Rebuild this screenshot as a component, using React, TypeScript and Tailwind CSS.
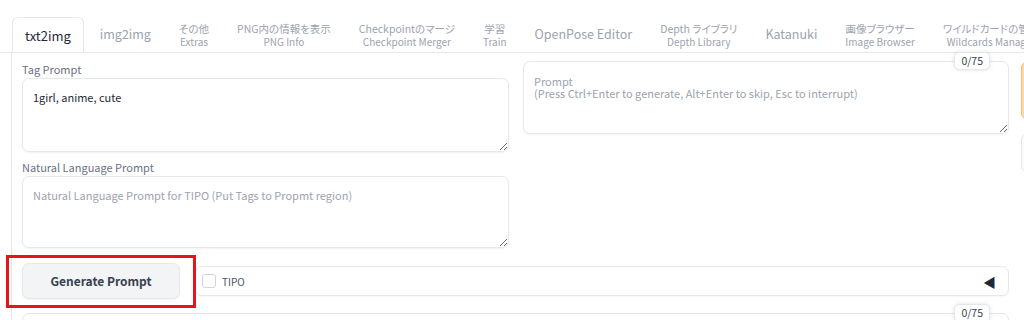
import React from "react";

const tabs: { top?: string; bottom: string }[] = [
  { bottom: "img2img" },
  { top: "その他", bottom: "Extras" },
  { top: "PNG内の情報を表示", bottom: "PNG Info" },
  { top: "Checkpointのマージ", bottom: "Checkpoint Merger" },
  { top: "学習", bottom: "Train" },
  { bottom: "OpenPose Editor" },
  { top: "Depth ライブラリ", bottom: "Depth Library" },
  { bottom: "Katanuki" },
  { top: "画像ブラウザー", bottom: "Image Browser" },
  { top: "ワイルドカードの管理", bottom: "Wildcards Manager" },
];

const Counter = () => (
  <div className="absolute right-[19px] -top-[9px] z-10 rounded-[5px] border border-[#e5e7eb] bg-white px-[6px] text-[10.5px] leading-[16px] text-[#374151] shadow-[0_0_4px_rgba(0,0,0,0.12)]">
    0/75
  </div>
);

const App = () => {
  return (
    <div className="relative w-[1024px] h-[320px] overflow-hidden bg-white font-['Noto_Sans_CJK_JP','Noto_Sans',sans-serif] [font-feature-settings:'palt']">
      {/* Tab bar */}
      <div className="flex items-end pt-[17px] pl-[12px] h-[53px] border-b border-[#e5e7eb] whitespace-nowrap overflow-hidden">
        <div className="shrink-0 h-[36px] -mb-px flex items-center px-[12px] border border-b-0 border-[#e5e7eb] rounded-t-[6px] bg-white text-[13px] text-[#1f2937]">
          txt2img
        </div>
        {tabs.map((t, i) => (
          <div
            key={i}
            className={
              "shrink-0 h-[35px] flex flex-col items-center justify-center px-[14px] text-[#9ca3af] " +
              (i === 0 ? "ml-[2px]" : "")
            }
          >
            {t.top ? (
              <>
                <span className="text-[10.5px] leading-[13px]">{t.top}</span>
                <span className="text-[10px] leading-[13px]">{t.bottom}</span>
              </>
            ) : (
              <span className="text-[12.5px]">{t.bottom}</span>
            )}
          </div>
        ))}
      </div>

      {/* Panel */}
      <div className="ml-[11px] border-l border-[#e5e7eb] pl-[10px] pt-[6px]">
        <div className="flex">
          {/* left column */}
          <div className="shrink-0 w-[487px] flex flex-col">
            <label className="text-[11px] leading-[18px] text-[#6b7280] mt-[1px]">Tag Prompt</label>
            <textarea
              defaultValue="1girl, anime, cute"
              className="h-[74px] w-full rounded-[7px] border border-[#e5e7eb] px-[10px] pt-[9px] text-[11px] leading-[18px] text-[#1f2937] shadow-[0_1px_2px_rgba(0,0,0,0.05)] outline-none"
            />
            <label className="mt-[6px] text-[11px] leading-[18px] text-[#6b7280]">Natural Language Prompt</label>
            <textarea
              placeholder="Natural Language Prompt for TIPO (Put Tags to Propmt region)"
              className="h-[72px] w-full rounded-[7px] border border-[#e5e7eb] px-[10px] pt-[9px] text-[11px] leading-[18px] text-[#1f2937] placeholder:text-[#9ca3af] shadow-[0_1px_2px_rgba(0,0,0,0.05)] outline-none"
            />
          </div>

          {/* right column */}
          <div className="shrink-0 ml-[14px] w-[486px] pt-[2px]">
            <div className="relative">
              <Counter />
              <textarea
                placeholder={"Prompt\n(Press Ctrl+Enter to generate, Alt+Enter to skip, Esc to interrupt)"}
                className="block h-[73px] w-full rounded-[7px] border border-[#e5e7eb] px-[10px] pt-[13px] text-[11px] leading-[12px] text-[#1f2937] placeholder:text-[#9ca3af] shadow-[0_1px_2px_rgba(0,0,0,0.05)] outline-none"
              />
            </div>
          </div>

          {/* cut-off buttons column */}
          <div className="shrink-0 ml-[12px] flex flex-col pt-[2px]">
            <div className="h-[59px] w-[40px] rounded-[7px] border border-[#fdba74] bg-[#fed7aa]" />
            <div className="mt-[13px] h-[40px] w-[40px] rounded-[7px] border border-[#e5e7eb] bg-[#f9fafb]" />
          </div>
        </div>

        {/* Generate row */}
        <div className="flex items-center mt-[15px] w-[987px]">
          <button className="shrink-0 h-[36px] w-[158px] rounded-[7px] border border-[#e5e7eb] bg-[#f3f4f6] text-[12px] font-semibold text-[#374151] shadow-[0_1px_2px_rgba(0,0,0,0.05)]">
            Generate Prompt
          </button>
          <div className="ml-[15px] flex h-[30px] flex-1 items-center rounded-[7px] border border-[#e5e7eb] bg-white pl-[6px] pr-[12px] shadow-[0_1px_2px_rgba(0,0,0,0.04)]">
            <span className="h-[14px] w-[14px] rounded-[3px] border border-[#d1d5db] bg-white" />
            <span className="ml-[6px] text-[10px] text-[#4b5563]">TIPO</span>
            <span className="ml-auto text-[13px] leading-none text-[#1f2937]">◀</span>
          </div>
        </div>

        {/* next prompt box (cut off) */}
        <div className="relative mt-[14px] w-[987px]">
          <Counter />
          <div className="h-[40px] rounded-[7px] border border-[#e5e7eb] bg-white" />
        </div>
      </div>

      {/* red highlight annotation */}
      <div className="absolute left-[6px] top-[255px] h-[53px] w-[190px] border-[3px] border-[#e8141d]" />
    </div>
  );
};

export default App;
